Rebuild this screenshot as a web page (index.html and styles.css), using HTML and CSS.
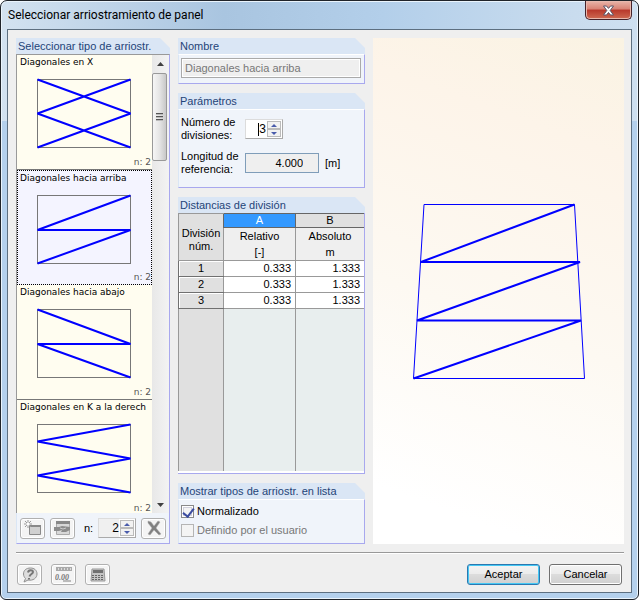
FILE: index.html
```html
<!DOCTYPE html>
<html lang="es">
<head>
    <meta charset="UTF-8">
    <meta name="viewport" content="width=device-width, initial-scale=1.0">
    <title>Seleccionar arriostramiento de panel</title>
    <link rel="stylesheet" href="styles.css">
</head>
<body>
    <div class="window">
        <header class="titlebar">
            <h1>Seleccionar arriostramiento de panel</h1>
            <button class="close" aria-label="Cerrar">
                <svg width="13" height="11" viewBox="0 0 13 11"><path d="M1.500 1h3l2 2.400L8.500 1h3L8.200 5.500l3.300 4.500h-3l-2-2.500-2 2.500h-3l3.300-4.500z" fill="#fff" stroke="#5a5468"/></svg>
            </button>
        </header>
        <div class="client">
            <main class="columns">
                <section class="group types">
                    <h2>Seleccionar tipo de arriostr.</h2>
                    <div class="list-area">
                        <div class="list">
                            <button class="item">
                                <span class="item-name">Diagonales en X</span>
                                <svg width="96" height="71" viewBox="0 0 96 71"><rect x="1.500" y="1.500" width="93" height="68"/><path d="M1.500 1.500L94.500 35.500 1.500 69.500M94.500 1.500L1.500 35.500 94.500 69.500"/></svg>
                                <span class="item-n">n: 2</span>
                            </button>
                            <button class="item selected">
                                <span class="item-name">Diagonales hacia arriba</span>
                                <svg width="96" height="71" viewBox="0 0 96 71"><rect x="1.500" y="1.500" width="93" height="68"/><path d="M94.500 1.500L1.500 36H94.500L1.500 69.500"/></svg>
                                <span class="item-n">n: 2</span>
                            </button>
                            <button class="item">
                                <span class="item-name">Diagonales hacia abajo</span>
                                <svg width="96" height="71" viewBox="0 0 96 71"><rect x="1.500" y="1.500" width="93" height="68"/><path d="M1.500 1.500L94.500 36H1.500L94.500 69.500"/></svg>
                                <span class="item-n">n: 2</span>
                            </button>
                            <button class="item">
                                <span class="item-name">Diagonales en K a la derech</span>
                                <svg width="96" height="71" viewBox="0 0 96 71"><rect x="1.500" y="1.500" width="93" height="68"/><path d="M94.500 1.500L1.500 18.500 94.500 35.500 1.500 52.500 94.500 69.500"/></svg>
                                <span class="item-n">n: 2</span>
                            </button>
                        </div>
                        <div class="scrollbar">
                            <button class="scroll-arrow" aria-label="Subir"><svg width="7" height="4" viewBox="0 0 7 4"><path d="M0 4L3.500 0 7 4z" fill="#404040"/></svg></button>
                            <div class="thumb"><svg width="7" height="9" viewBox="0 0 7 9"><path d="M0 .5h7M0 3.500h7M0 6.500h7" stroke="#555"/><path d="M0 1.500h7M0 4.500h7M0 7.500h7" stroke="#bbb"/></svg></div>
                            <button class="scroll-arrow" aria-label="Bajar"><svg width="7" height="4" viewBox="0 0 7 4"><path d="M0 0L3.500 4 7 0z" fill="#404040"/></svg></button>
                        </div>
                    </div>
                    <div class="toolbar">
                        <button class="tool" aria-label="Nuevo">
                            <svg width="18" height="16" viewBox="0 0 18 16"><path d="M5.500 5.500h11v9h-11z" fill="#d0d0d0" stroke="#8a8a8a"/><path d="M5 5h12v2H5z" fill="#888"/><path d="M4 0v8M0 4h8M1 1l6 6M7 1L1 7" stroke="#999"/><circle cx="4" cy="4" r="1.500" fill="#fff"/></svg>
                        </button>
                        <button class="tool" aria-label="Editar">
                            <svg width="18" height="16" viewBox="0 0 18 16"><path d="M3.500 1.500h13v13h-13z" fill="#d8d8d8" stroke="#aaa"/><path d="M3 1h14v3H3z" fill="#888"/><path d="M1 7h5l3-1 8 1v3l-4 2H8l1-2-3 1H1z" fill="#8c8c8c"/><path d="M7 8l3 1 3-1" fill="none" stroke="#ccc"/></svg>
                        </button>
                        <label for="typeN">n:</label>
                        <span class="spinner small">
                            <input type="text" id="typeN" value="2">
                            <span class="steps">
                                <button aria-label="Más"><svg width="6" height="3" viewBox="0 0 6 3"><path d="M0 3l3-3 3 3z" fill="#4a5cab"/></svg></button>
                                <button aria-label="Menos"><svg width="6" height="3" viewBox="0 0 6 3"><path d="M0 0l3 3 3-3z" fill="#4a5cab"/></svg></button>
                            </span>
                        </span>
                        <button class="tool" aria-label="Eliminar">
                            <svg width="16" height="16" viewBox="0 0 16 16"><path d="M2 1l3 1 3 4 4-5 2 1-4 6 5 6-2 1-5-5-4 5-2-1 4-6-4-5z" fill="#808080" stroke="#aaa" stroke-width=".5"/></svg>
                        </button>
                    </div>
                </section>

                <div class="middle">
                    <section class="group">
                        <h2><label for="name">Nombre</label></h2>
                        <div class="group-body name-body">
                            <input type="text" id="name" value="Diagonales hacia arriba" disabled>
                        </div>
                    </section>

                    <section class="group">
                        <h2>Parámetros</h2>
                        <div class="group-body params">
                            <label for="divisions">Número de<br>divisiones:</label>
                            <span class="spinner">
                                <input type="text" id="divisions" value="3">
                                <span class="steps">
                                    <button aria-label="Más"><svg width="6" height="3" viewBox="0 0 6 3"><path d="M0 3l3-3 3 3z" fill="#4a5cab"/></svg></button>
                                    <button aria-label="Menos"><svg width="6" height="3" viewBox="0 0 6 3"><path d="M0 0l3 3 3-3z" fill="#4a5cab"/></svg></button>
                                </span>
                                <span class="caret"></span>
                            </span>
                            <label for="length">Longitud de<br>referencia:</label>
                            <input type="text" id="length" class="length" value="4.000" readonly>
                            <span class="unit">[m]</span>
                        </div>
                    </section>

                    <section class="group distances">
                        <h2>Distancias de división</h2>
                        <table>
                            <colgroup><col class="col-num"><col class="col-a"><col></colgroup>
                            <thead>
                                <tr class="letters">
                                    <th rowspan="2" class="corner">División<br>núm.</th>
                                    <th class="active">A</th>
                                    <th>B</th>
                                </tr>
                                <tr class="titles">
                                    <th>Relativo<br>[-]</th>
                                    <th>Absoluto<br>m</th>
                                </tr>
                            </thead>
                            <tbody>
                                <tr><th>1</th><td>0.333</td><td>1.333</td></tr>
                                <tr><th>2</th><td>0.333</td><td>1.333</td></tr>
                                <tr><th>3</th><td>0.333</td><td>1.333</td></tr>
                                <tr class="rest"><td></td><td></td><td></td></tr>
                            </tbody>
                        </table>
                    </section>

                    <section class="group">
                        <h2>Mostrar tipos de arriostr. en lista</h2>
                        <div class="group-body checks">
                            <label><input type="checkbox" checked>Normalizado</label>
                            <label class="disabled"><input type="checkbox" disabled>Definido por el usuario</label>
                        </div>
                    </section>
                </div>

                <section class="preview">
                    <svg width="176" height="180" viewBox="0 0 176 180" fill="none" stroke="#0000ff">
                        <path d="M13 3.500H163.500L173.500 177.500H2.500z"/>
                        <path d="M163.500 3.500L10 61H169L6 119.500H170L2.500 177.500" stroke-width="2" stroke-linejoin="bevel"/>
                    </svg>
                </section>
            </main>

            <footer class="footer">
                <button class="tool" aria-label="Ayuda">
                    <svg width="18" height="16" viewBox="0 0 18 16"><path d="M9.500 1C5 1 2.500 3.500 2.500 7c0 2 1 3.500 2 4.500L3 15l4-2c5 1 9-2 9-6s-3-6-6.500-6z" fill="#ddd" stroke="#909090"/><path d="M7 5.500C7.500 2.500 12 2.500 12 5c0 2-3 2-3.500 4.500M8 11v1.500" fill="none" stroke="#777" stroke-width="2"/></svg>
                </button>
                <button class="tool" aria-label="Unidades">
                    <svg width="18" height="16" viewBox="0 0 18 16"><path d="M1 0h16v4H1z" fill="#aaa"/><path d="M3.500 1v2M6.500 1v2M9.500 1v2M12.500 1v2M15.500 1v2" stroke="#ddd"/><path d="M8 13h8v2H8z" fill="#bbb"/><text x="0" y="13" class="digits">0.00</text></svg>
                </button>
                <button class="tool" aria-label="Calculadora">
                    <svg width="18" height="16" viewBox="0 0 18 16"><path d="M3 2h12l1 12H2z" fill="#c4c4c4" stroke="#999"/><path d="M4 3h10v3H4z" fill="#707070"/><path d="M3 8.500h12M3 10.500h12M3 12.500h12" stroke="#666" stroke-dasharray="2 1"/></svg>
                </button>
                <span class="spacer"></span>
                <button class="action default">Aceptar</button>
                <button class="action">Cancelar</button>
            </footer>
        </div>
    </div>
</body>
</html>
```
FILE: styles.css
```css
* {
    box-sizing: border-box;
    margin: 0;
    padding: 0;
}

body {
    background: #fff;
    color: #000;
    font-family: "Liberation Sans", Arial, sans-serif;
    font-size: 11px;
    line-height: 13px;
}

button, input {
    font: inherit;
    color: inherit;
}

svg {
    display: block;
}

.window {
    display: flex;
    flex-direction: column;
    min-height: 100vh;
    padding: 0 6px 6px;
    border: 1px solid #20242a;
    border-radius: 7px 7px 6px 6px;
    background: linear-gradient(90deg, #d3e2f0, #a9c5e0 35%, #b3cfea 60%, #c9dcee 90%, #cddff0) top / 100% 120px no-repeat, #b4d0ec;
    box-shadow: inset 0 0 0 1px #eaf4fc;
}

.titlebar {
    display: flex;
    justify-content: space-between;
    align-items: flex-start;
    height: 28px;
}

.titlebar h1 {
    font: 12px/28px Roboto, "Noto Sans", sans-serif;
    padding-left: 1px;
}

.close {
    display: flex;
    align-items: center;
    justify-content: center;
    width: 47px;
    height: 19px;
    border: 1px solid #45222a;
    border-top: none;
    border-radius: 0 0 5px 5px;
    background: linear-gradient(#e9b5a9, #d98274 45%, #b8382b 50%, #cf6a52);
    box-shadow: inset 0 0 0 1px #e8b8ad;
}

/* dialog content */
.client {
    flex: 1;
    display: flex;
    flex-direction: column;
    padding: 8px 7px 7px 8px;
    border: 1px solid #5d6f80;
    background: #efefef;
}

.columns {
    flex: 1;
    display: grid;
    grid-template-columns: 154px 187px 1fr;
    gap: 8px;
}

.middle {
    display: flex;
    flex-direction: column;
    gap: 9px;
}

.group {
    display: flex;
    flex-direction: column;
    background: linear-gradient(#a8a8ee, #a8a8ee) right bottom / 1px calc(100% - 10px) no-repeat;
}

.group h2 {
    height: 16px;
    padding-left: 2px;
    font-size: 11px;
    font-weight: normal;
    line-height: 16px;
    white-space: nowrap;
    color: #1f4478;
    background: #dae6f5;
    clip-path: polygon(0 0, calc(100% - 10px) 0, 100% 10px, 100% 100%, 0 100%);
}

.group-body {
    flex: 1;
    border-left: 1px solid #dae6f5;
    border-top: 1px solid #fff;
    border-right: 1px solid #a8a8ee;
    border-bottom: 1px solid #a8a8ee;
    background: #f0f4fa;
}

/* type list */
.list-area {
    flex: 1 0 458px;
    display: flex;
    height: 458px;
    overflow: hidden;
    border-top: 1px solid #999;
    border-left: 1px solid #999;
    border-right: 1px solid #a8a8ee;
}

.list {
    flex: 1;
    min-width: 0;
    background: #fffdf0;
}

.item {
    display: flex;
    flex-direction: column;
    width: 100%;
    height: 115px;
    padding: 0 1px 1px 3px;
    border: none;
    border-bottom: 1px solid #777;
    background: #fffdf0;
    text-align: left;
    overflow: hidden;
}

.item.selected {
    border: 1px dotted #000;
    background: #f4f4ff;
    padding: 0 0 1px 2px;
}

.item:last-child {
    border-bottom: none;
}

.item-name {
    height: 15px;
    font: 9px/15px "DejaVu Sans", Verdana, sans-serif;
    white-space: nowrap;
}

.item svg {
    margin: 8px 0 0 16px;
    fill: none;
}

.item svg rect {
    stroke: #777;
}

.item svg path {
    stroke: #0000ff;
    stroke-width: 2;
    stroke-linejoin: bevel;
}

.item-n {
    margin-top: auto;
    align-self: flex-end;
    font: 9px/12px "DejaVu Sans", Verdana, sans-serif;
    color: #555;
}

.scrollbar {
    display: flex;
    flex-direction: column;
    width: 17px;
    background: linear-gradient(90deg, #e8e8e8, #f3f3f3);
}

.scroll-arrow {
    display: flex;
    align-items: center;
    justify-content: center;
    height: 17px;
    border: none;
    background: none;
}

.thumb {
    display: flex;
    align-items: center;
    justify-content: center;
    height: 88px;
    margin: 1px 2px auto 0;
    border: 1px solid #999;
    border-radius: 2px;
    background: linear-gradient(90deg, #f6f6f6, #e5e5e5 50%, #c8c8c8);
}

.toolbar {
    display: flex;
    align-items: center;
    justify-content: space-between;
    height: 31px;
    padding: 0 3px;
    border: 1px solid #a8a8ee;
    border-top: none;
    border-left-color: #dae6f5;
    background: #f0f4fa;
}

.toolbar label {
    margin-left: 4px;
}

.tool {
    display: flex;
    align-items: center;
    justify-content: center;
    width: 25px;
    height: 21px;
    border: 1px solid #b0b0b0;
    border-radius: 3px;
    background: #f4f4f4;
    box-shadow: inset 0 0 0 1px #fff;
}

.digits {
    font: italic bold 8px "Liberation Serif", serif;
    fill: #777;
}

/* inputs */
.spinner {
    position: relative;
    display: flex;
    width: 38px;
    height: 20px;
    border: 1px solid #aaa;
    border-top-color: #dcdcdc;
    border-left-color: #dcdcdc;
    background: #fff;
}

.spinner input {
    flex: 1;
    min-width: 0;
    border: none;
    background: none;
    font-size: 12px;
    text-align: right;
}

.spinner.small input {
    background: #f0f0f0;
}

.caret {
    position: absolute;
    left: 12px;
    top: 3px;
    width: 1px;
    height: 13px;
    background: #000;
}

.steps {
    display: flex;
    flex-direction: column;
    width: 16px;
    padding: 1px;
}

.steps button {
    flex: 1;
    display: flex;
    align-items: center;
    justify-content: center;
    border: 1px solid #bbb;
    background: #f2f2f2;
}

.name-body {
    padding: 3px 3px 5px 2px;
}

.name-body input {
    display: block;
    width: 100%;
    height: 20px;
    padding: 0 3px;
    border: 1px solid #aaa;
    background: #efefef;
    box-shadow: inset 0 0 0 1px #fff;
    color: #777;
}

.params {
    display: grid;
    grid-template-columns: 62px 74px 1fr;
    column-gap: 2px;
    row-gap: 8px;
    align-items: center;
    padding: 6px 0 11px 2px;
}

.params label {
    white-space: nowrap;
}

.params .spinner {
    grid-column: 2 / 4;
}

.params .unit {
    padding-left: 4px;
}

.length {
    width: 100%;
    height: 20px;
    padding-right: 15px;
    border: 1px solid #7f9db9;
    background: #efefef;
    text-align: right;
}

/* division table */
.distances {
    flex: 1;
    padding-right: 1px;
    border-bottom: 1px solid #a8a8ee;
}

.distances h2 {
    margin-right: -1px;
}

table {
    flex: 1;
    width: 100%;
    table-layout: fixed;
    border-collapse: collapse;
    border-bottom: 2px solid #fff;
    background: #e8eeee;
}

.col-num {
    width: 45px;
}

.col-a {
    width: 72px;
}

th, td {
    height: 16px;
    border: 1px solid #999;
    border-right: none;
    font-weight: normal;
    line-height: 15px;
}

tbody th {
    background: #e0e0e0;
    border-color: #707070;
    box-shadow: inset 1px 1px 0 #fff;
}

td {
    padding-right: 4px;
    background: #fff;
    text-align: right;
}

.letters th {
    height: 14px;
    line-height: 13px;
    background: #e0e0e0;
    border-color: #666;
}

.letters .corner {
    padding-top: 6px;
    border-color: #999;
}

.letters th.active {
    background: #3399ff;
    color: #fff;
}

.titles th {
    height: 33px;
    background: #efefef;
    line-height: 16px;
}

.rest td {
    height: auto;
    border-bottom: none;
    background: #e8eeee;
}

.rest td:first-child {
    background: #e0e0e0;
}

/* checkboxes */
.checks {
    display: flex;
    flex-direction: column;
    gap: 6px;
    padding: 5px 0 6px 2px;
}

.checks label {
    display: flex;
    align-items: center;
    gap: 3px;
}

.checks input {
    appearance: none;
    width: 13px;
    height: 13px;
    border: 1px solid #8a8a8a;
    background: #f4f4f4;
    box-shadow: inset 0 0 0 1px #fff, inset 0 0 0 2px #d0d0dc;
}

.checks input:checked::before {
    content: "";
    display: block;
    width: 5px;
    height: 9px;
    margin-left: 3px;
    border: solid #3b4ca0;
    border-width: 0 2px 2px 0;
    transform: rotate(38deg);
}

.checks .disabled {
    color: #777;
}

.checks .disabled input {
    border-color: #b5b5b5;
    box-shadow: none;
}

.preview {
    display: flex;
    align-items: center;
    justify-content: center;
    background: linear-gradient(20deg, #fff 10%, #fdf9f2 45%, #fdf4e9 80%, #faf3e3);
}

/* footer */
.footer {
    display: flex;
    align-items: center;
    gap: 9px;
    margin-top: 8px;
    padding: 11px 2px 0 1px;
    border-top: 1px solid #999;
    box-shadow: inset 0 1px 0 #fff;
}

.spacer {
    flex: 1;
}

.action {
    width: 73px;
    height: 21px;
    border: 1px solid #707070;
    border-radius: 3px;
    background: linear-gradient(#f4f4f4, #ececec 45%, #dcdcdc 50%, #d0d0d0);
    box-shadow: inset 0 0 0 1px #fff;
}

.action.default {
    border-color: #2c78b0;
    box-shadow: inset 0 0 0 1px #45c8f4;
}
```
